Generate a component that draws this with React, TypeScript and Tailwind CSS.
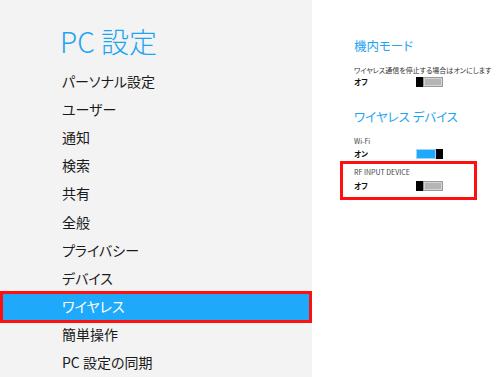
import React from "react";

const FONT = "[font-family:'Noto_Sans_CJK_JP','Noto_Sans',sans-serif] [font-feature-settings:'palt']";

const items = [
  "パーソナル設定",
  "ユーザー",
  "通知",
  "検索",
  "共有",
  "全般",
  "プライバシー",
  "デバイス",
  "ワイヤレス",
  "簡単操作",
  "PC 設定の同期",
];

function Toggle({ on }: { on: boolean }) {
  return (
    <div className="flex h-[10px] w-[27px]">
      {on ? (
        <>
          <div className="flex-1 border border-[#9fd6f7] bg-[#1fa9fb]" />
          <div className="w-[7px] bg-black" />
        </>
      ) : (
        <>
          <div className="w-[7px] bg-black" />
          <div className="flex-1 border border-[#9a9a9a] bg-[#b5b5b5] shadow-[inset_0_0_0_1px_#d4d4d4]" />
        </>
      )}
    </div>
  );
}

function ToggleRow({ label, on }: { label: string; on: boolean }) {
  return (
    <div className="flex h-[10px] items-center">
      <div className="w-[62px] text-[7.5px] font-bold leading-[10px] text-[#111]">{label}</div>
      <Toggle on={on} />
    </div>
  );
}

export default function App() {
  return (
    <div className={`flex h-[377px] w-[500px] overflow-hidden bg-white ${FONT}`}>
      <div className="flex h-full w-[312px] shrink-0 flex-col bg-[#f3f3f3]">
        <div className="mt-[27px] h-[28px] pl-[60px] text-[28px] font-light leading-[28px] text-[#1fa4f2]">PC 設定</div>
        <div className="mt-[12px] flex flex-col">
          {items.map((t) =>
            t === "ワイヤレス" ? (
              <div
                key={t}
                className="-my-[2px] flex h-[32.2px] items-center border-[3px] border-[#ff1010] bg-[#1fa9fb] pl-[59px] text-[14px] text-white"
              >
                {t}
              </div>
            ) : (
              <div key={t} className="flex h-[28.2px] items-center pl-[62px] text-[14px] text-[#1a1a1a]">
                {t}
              </div>
            )
          )}
        </div>
      </div>
      <div className="flex flex-1 flex-col pl-[42px]">
        <div className="mt-[38px] h-[16px] text-[12.5px] leading-[16px] text-[#1fa4f2]">機内モード</div>
        <div className="mt-[11px] h-[10px] whitespace-nowrap text-[7px] leading-[10px] text-[#333]">
          ワイヤレス通信を停止する場合はオンにします
        </div>
        <div className="mt-[2px]">
          <ToggleRow label="オフ" on={false} />
        </div>
        <div className="mt-[22px] h-[16px] whitespace-nowrap text-[12.5px] leading-[16px] text-[#1fa4f2]">
          ワイヤレス デバイス
        </div>
        <div className="mt-[11px] h-[10px] text-[7px] leading-[10px] text-[#444]">Wi-Fi</div>
        <div className="mt-[3px]">
          <ToggleRow label="オン" on={true} />
        </div>
        <div className="-ml-[14px] mt-[2px] w-[137px] border-[3px] border-[#ff1010] pb-[6px] pl-[11px] pt-[3px]">
          <div className="h-[10px] whitespace-nowrap text-[7px] leading-[10px] text-[#444]">RF INPUT DEVICE</div>
          <div className="mt-[4px]">
            <ToggleRow label="オフ" on={false} />
          </div>
        </div>
      </div>
    </div>
  );
}
